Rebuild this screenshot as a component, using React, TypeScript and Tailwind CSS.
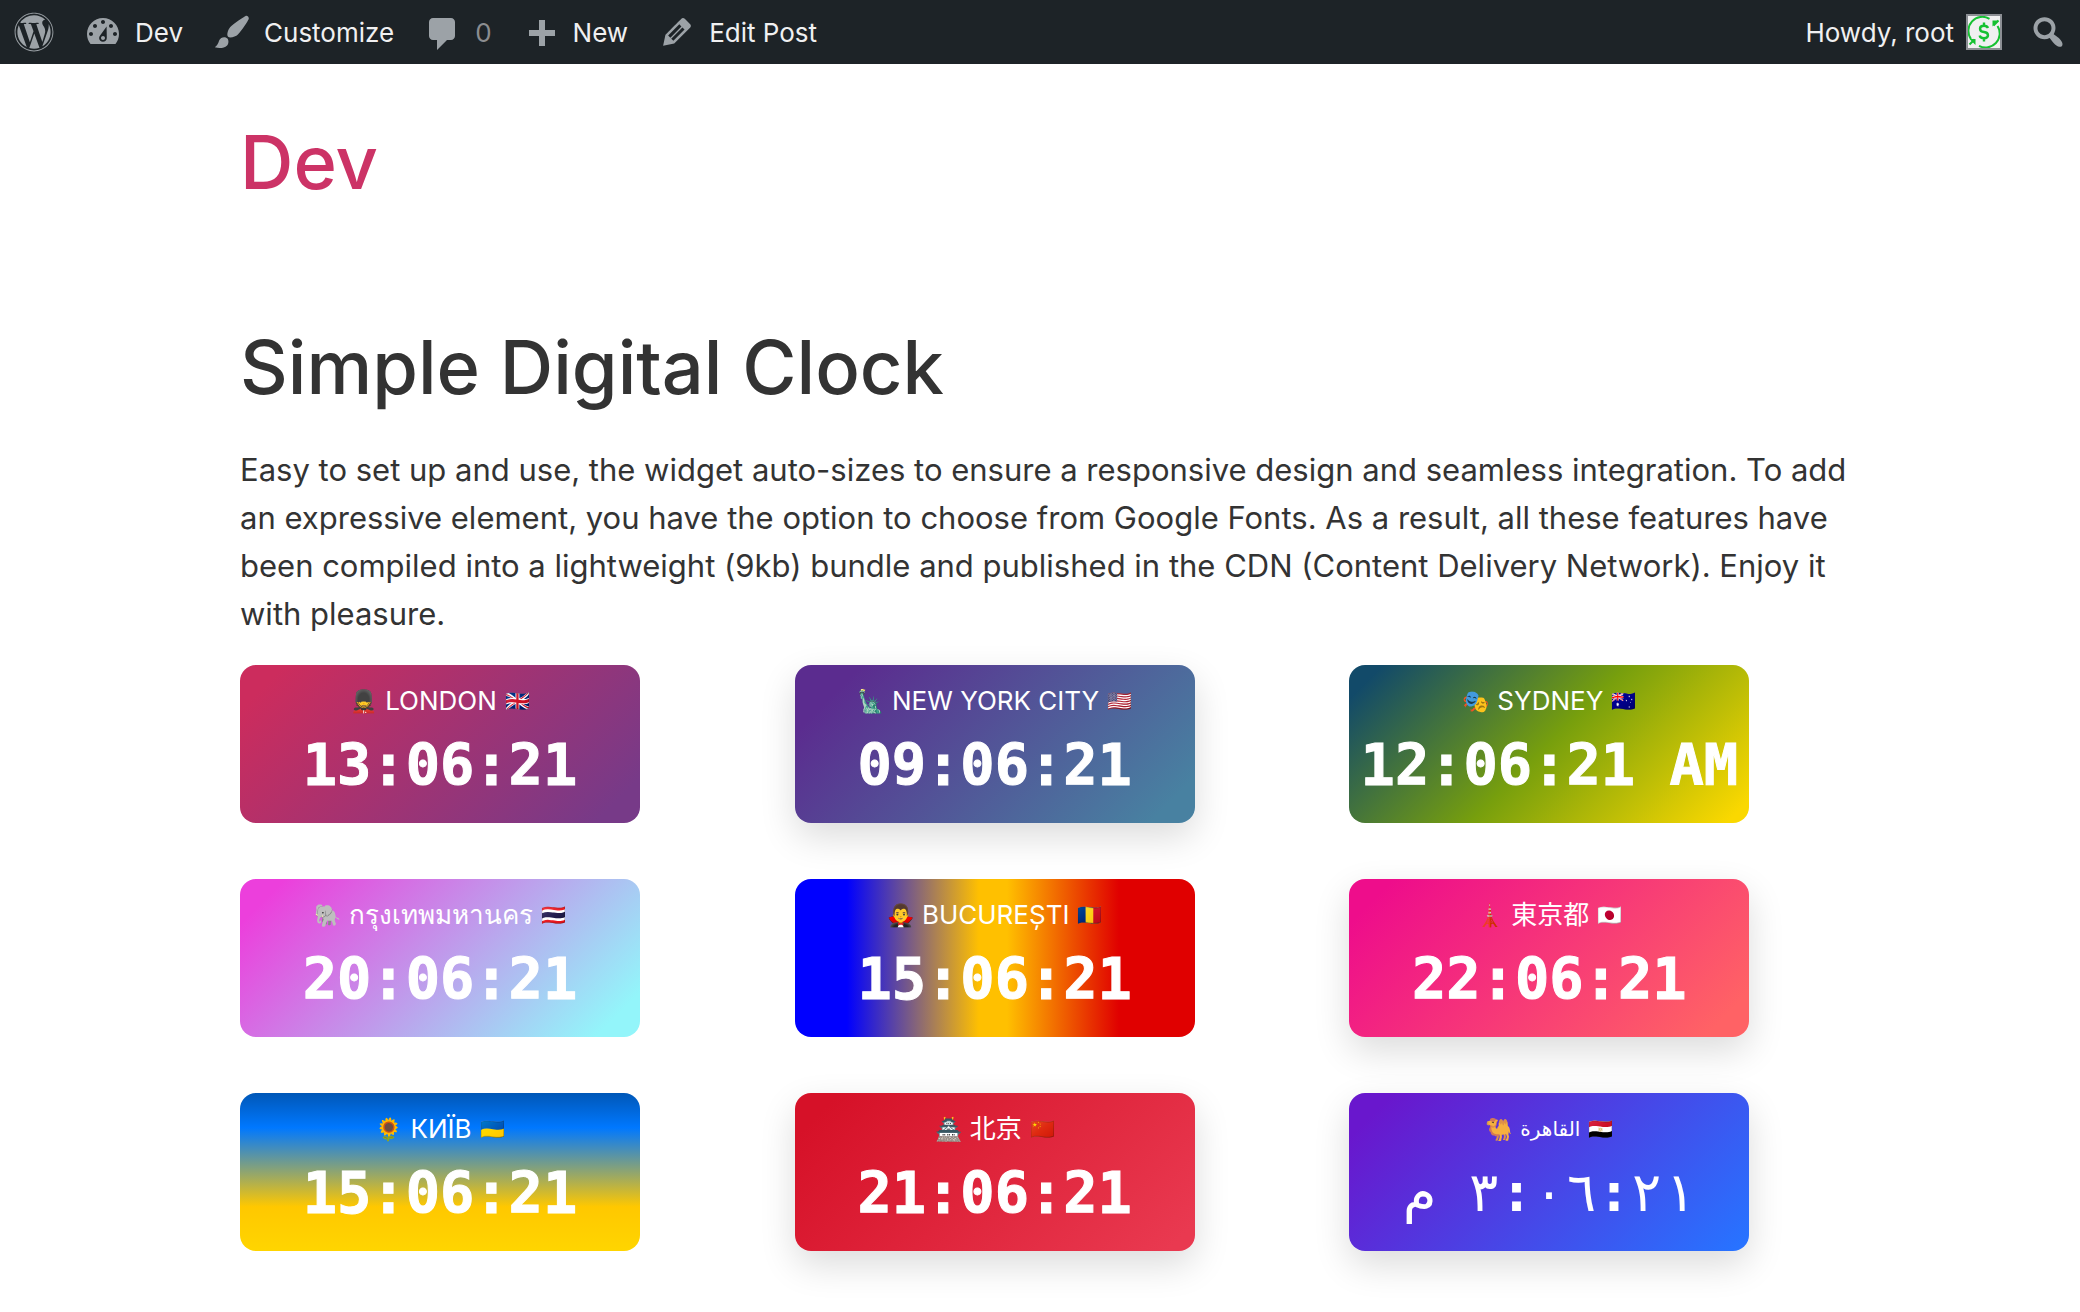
import React from "react";
import { FaWordpress } from "react-icons/fa";

const icons = {
  dashboard:
    "M3.76 16h12.48c1.1-1.37 1.76-3.11 1.76-5 0-4.42-3.58-8-8-8s-8 3.58-8 8c0 1.89.66 3.63 1.76 5zM10 4c.55 0 1 .45 1 1s-.45 1-1 1-1-.45-1-1 .45-1 1-1zM6 6c.55 0 1 .45 1 1s-.45 1-1 1-1-.45-1-1 .45-1 1-1zM14 6c.55 0 1 .45 1 1s-.45 1-1 1-1-.45-1-1 .45-1 1-1zM11.8 7.2L11.9 13c0 1.05-.85 1.9-1.9 1.9s-1.95-.85-1.95-1.9c0-.5.2-.95.5-1.3zM4 10c.55 0 1 .45 1 1s-.45 1-1 1-1-.45-1-1 .45-1 1-1zM16 10c.55 0 1 .45 1 1s-.45 1-1 1-1-.45-1-1 .45-1 1-1zM10 12c.55 0 1 .45 1 1s-.45 1-1 1-1-.45-1-1 .45-1 1-1z",
  brush:
    "M18.33 3.57s.27-.8-.31-1.36c-.53-.52-1.22-.24-1.22-.24-.61.3-5.76 3.47-7.67 5.57-.86.96-2.06 3.79-1.09 4.82.92.98 3.96-.17 4.79-1 2.06-2.06 5.21-7.17 5.5-7.79zM1.4 17.65c2.37-1.56 1.46-3.41 3.23-4.64.93-.65 2.22-.62 3.08.29.63.67.8 2.57-.16 3.46-1.57 1.45-4 1.55-6.15.89z",
  comment:
    "M5 3h9c1.1 0 2 .9 2 2v7c0 1.1-.9 2-2 2h-2l-5 5v-5H5c-1.1 0-2-.9-2-2V5c0-1.1.9-2 2-2z",
  plus: "M17 9v3h-5v5H9v-5H4V9h5V4h3v5h5z",
  pencil:
    "M13.89 3.39l2.71 2.72c.46.46.42 1.24.03 1.64l-8.01 8.02-5.56 1.16 1.16-5.58s7.6-7.63 7.99-8.03c.39-.39 1.22-.39 1.68.07zm-2.73 2.79l-5.59 5.61 1.11 1.11 5.54-5.65zm-2.97 8.23l5.58-5.6-1.07-1.08-5.59 5.6z",
  search:
    "M12.14 4.18c1.87 1.87 2.11 4.75.72 6.89.12.1.22.21.36.31.2.16.47.36.81.59.34.24.56.39.66.47.42.31.73.57.94.78.32.32.6.65.84 1 .25.35.44.69.59 1.04.14.35.21.68.18 1-.02.32-.14.59-.36.81s-.49.34-.81.36c-.31.02-.65-.04-.99-.19-.35-.14-.7-.34-1.04-.59-.35-.24-.68-.52-1-.84-.21-.21-.47-.52-.77-.93-.1-.13-.25-.35-.47-.66-.22-.32-.4-.57-.56-.78-.16-.2-.29-.35-.44-.5-2.07 1.09-4.69.76-6.44-.98-2.14-2.15-2.14-5.64 0-7.78 2.15-2.15 5.63-2.15 7.78 0zm-1.41 6.36c1.36-1.37 1.36-3.58 0-4.95-1.37-1.37-3.59-1.37-4.95 0-1.37 1.37-1.37 3.58 0 4.95 1.36 1.37 3.58 1.37 4.95 0z",
};

function BarIcon({ name }: { name: keyof typeof icons }) {
  return (
    <svg viewBox="0 0 20 20" className="size-10 shrink-0 fill-[#9ca2a7]" fillRule="evenodd" aria-hidden="true">
      <path d={icons[name]} />
    </svg>
  );
}

function BarLink({ icon, children, muted }: { icon: keyof typeof icons; children: React.ReactNode; muted?: boolean }) {
  return (
    <a href="#" className="flex items-center gap-3">
      <BarIcon name={icon} />
      <span className={muted ? "text-[#8b8d90]" : ""}>{children}</span>
    </a>
  );
}

function AdminBar() {
  return (
    <nav className="flex h-16 items-center justify-between bg-[#1d2327] pr-3 pl-[14px] text-[26px] text-[#f0f0f1]">
      <div className="flex items-center gap-[29px]">
        <a href="#" aria-label="About WordPress">
          <FaWordpress className="size-10 text-[#9ca2a7]" />
        </a>
        <BarLink icon="dashboard">Dev</BarLink>
        <BarLink icon="brush">Customize</BarLink>
        <BarLink icon="comment" muted>0</BarLink>
        <BarLink icon="plus">New</BarLink>
        <BarLink icon="pencil">Edit Post</BarLink>
      </div>
      <div className="flex items-center gap-[26px]">
        <a href="#" className="flex items-center gap-3">
          Howdy, root
          <svg viewBox="0 0 32 32" className="size-9 border-2 border-[#8c8f94] bg-[#f0f0f1]" fill="none" stroke="#16c132" strokeWidth="2" aria-hidden="true">
            <path d="M21.500 2.800A14 14 0 0 0 3 23M11 29.800A14 14 0 0 0 29.500 10" />
            <path d="M1.500 23h6v6zM30.500 4.500h-6v6z" fill="#16c132" stroke="none" />
            <path d="M1.500 28.500l5-5M30.500 4.500l-5 5" />
            <path d="M20 12c-.6-1.700-2-2.300-4-2.300-5.300 0-5.300 5.800 0 6.300s5.300 6.300 0 6.300c-2.400 0-4-.9-4.300-2.800M16 6.500v3.500M16 22v3.500" strokeWidth="2.400" />
          </svg>
        </a>
        <button type="button" aria-label="Search">
          <BarIcon name="search" />
        </button>
      </div>
    </nav>
  );
}

type Clock = { before: string; city: string; after: string; time: string; style: string; arabic?: boolean };

const shadow = "shadow-[0_14px_36px_rgba(0,0,0,0.14)]";

const clocks: Clock[] = [
  { before: "💂", city: "LONDON", after: "🇬🇧", time: "13:06:21", style: "bg-[linear-gradient(135deg,#cc2c5d_8%,#773a88_92%)]" },
  { before: "🗽", city: "NEW YORK CITY", after: "🇺🇸", time: "09:06:21", style: "bg-[linear-gradient(135deg,#5b2c8f_12%,#4881a1_92%)] " + shadow },
  { before: "🎭", city: "SYDNEY", after: "🇦🇺", time: "12:06:21 AM", style: "bg-[linear-gradient(135deg,#124a69_6%,#779f0d_50%,#fad800_96%)]" },
  { before: "🐘", city: "กรุงเทพมหานคร", after: "🇹🇭", time: "20:06:21", style: "bg-[linear-gradient(135deg,#ec3fdc_8%,#93f5fa_92%)]" },
  { before: "🧛‍♂️", city: "BUCUREȘTI", after: "🇷🇴", time: "15:06:21", style: "bg-[linear-gradient(90deg,#0000ff_13%,#ffc000_46%,#ffc000_53%,#e00000_81%)]" },
  { before: "🗼", city: "東京都", after: "🇯🇵", time: "22:06:21", style: "bg-[linear-gradient(135deg,#ee0d8b_8%,#ff6265_92%)] " + shadow },
  { before: "🌻", city: "КИЇВ", after: "🇺🇦", time: "15:06:21", style: "bg-[linear-gradient(180deg,#0057b7_0%,#0078ff_22%,#ffc800_72%,#ffd500_100%)]" },
  { before: "🏯", city: "北京", after: "🇨🇳", time: "21:06:21", style: "bg-[linear-gradient(135deg,#d61128_8%,#e93950_95%)] " + shadow },
  { before: "🐫", city: "القاهرة", after: "🇪🇬", time: "٣:٠٦:٢١", arabic: true, style: "bg-[linear-gradient(135deg,#6917cd_8%,#2872ff_97%)] " + shadow },
];

function ClockCard({ before, city, after, time, style, arabic }: Clock) {
  return (
    <section className={"flex h-[158px] w-full max-w-[400px] flex-col items-center rounded-2xl pt-4 text-white " + style}>
      <h2 className="flex items-center gap-2 text-[26px] leading-10 whitespace-nowrap">
        <span className="text-[22px] leading-10">{before}</span>
        <span className={arabic ? "font-['DejaVu_Sans',sans-serif] text-xl leading-10" : ""}>{city}</span>
        <span className="text-xl leading-10">{after}</span>
      </h2>
      {arabic ? (
        <time className="mt-2 flex font-['DejaVu_Sans_Mono',monospace] text-[54px] leading-[72px]">
          <span className="mr-8">م</span>
          {time.split(/(:)/).map((part, i) => (
            <span key={i} className={part === ":" ? "font-bold" : ""}>{part}</span>
          ))}
        </time>
      ) : (
        <time className="mt-2 font-['DejaVu_Sans_Mono',monospace] text-[57px] leading-[72px] font-bold whitespace-pre [-webkit-text-stroke:1px_white]">
          {time}
        </time>
      )}
    </section>
  );
}

export default function App() {
  return (
    <div className="min-h-screen bg-white font-['Inter','Noto_Sans','Noto_Sans_CJK_JP',sans-serif] text-[#333]">
      <AdminBar />
      <div className="mx-auto max-w-[1600px]">
        <header className="pt-[50px]">
          <p className="text-[74px] leading-[96px] font-medium">
            <a href="#" className="text-[#cc3366]">Dev</a>
          </p>
        </header>
        <main>
          <h1 className="mt-[109px] text-[74px] leading-[96px] font-medium">Simple Digital Clock</h1>
          <p className="mt-[31px] text-[31px] leading-[48px] xl:whitespace-nowrap">
            Easy to set up and use, the widget auto-sizes to ensure a responsive design and seamless integration. To add{" "}
            <br className="hidden xl:inline" />
            an expressive element, you have the option to choose from Google Fonts. As a result, all these features have{" "}
            <br className="hidden xl:inline" />
            been compiled into a lightweight (9kb) bundle and published in the CDN (Content Delivery Network). Enjoy it{" "}
            <br className="hidden xl:inline" />
            with pleasure.
          </p>
          <div className="mt-[27px] grid grid-cols-3 gap-x-16 gap-y-14">
            {clocks.map((c) => (
              <ClockCard key={c.city} {...c} />
            ))}
          </div>
        </main>
      </div>
    </div>
  );
}
